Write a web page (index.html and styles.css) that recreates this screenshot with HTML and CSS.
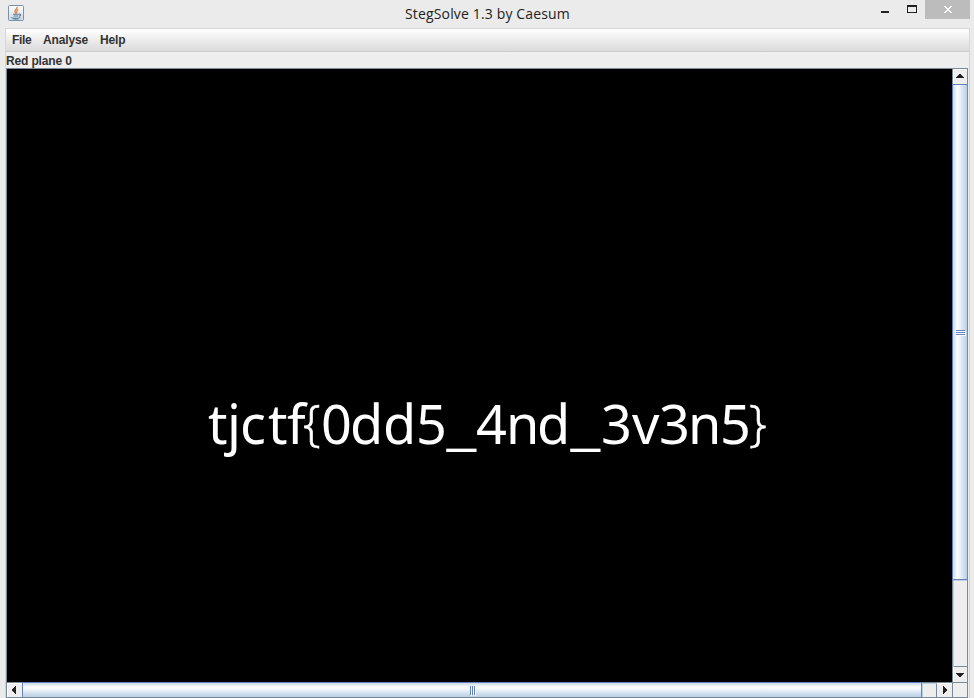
FILE: index.html
```html
<!DOCTYPE html>
<html lang="en">
<head>
<meta charset="utf-8">
<title>StegSolve 1.3 by Caesum</title>
<link rel="stylesheet" href="styles.css">
</head>
<body>
<header class="titlebar">
  <svg class="app-icon" width="16" height="16" viewBox="0 0 16 16">
    <defs><linearGradient id="tile" x2="0" y2="1"><stop stop-color="#fff"/><stop offset="1" stop-color="#cad8e2"/></linearGradient></defs>
    <rect x=".5" y=".5" width="15" height="15" rx="1" fill="url(#tile)" stroke="#7893a8"/>
    <path d="M9 1.8C10 4 5.6 4.7 7.2 7.2L8 8.7M10.2 4.4C7.8 5.5 9.4 6.8 8.5 8.2" fill="none" stroke="#e98032" stroke-width="1.3"/>
    <path d="M5 9.3H10.7M5.6 11H10M10.7 9.2C13.5 8.5 13.2 11 10.8 11.3M3.7 12.2C3 13.7 11 13.6 12.3 12.3M5.5 14H10.5" fill="none" stroke="#547c9c" stroke-width="1.1"/>
  </svg>
  <h1 class="title">StegSolve 1.3 by Caesum</h1>
  <div class="controls">
    <svg class="minimize" width="10" height="14"><path d="M1 11h8v2H1z" fill="#222"/></svg>
    <svg class="maximize" width="10" height="14"><path d="M0 5h10v8H0zM1 7v5h8V7z" fill="#222" fill-rule="evenodd"/></svg>
    <div class="close"><svg width="8" height="7" shape-rendering="crispEdges"><path d="M0 0h2v1h1v1h2V1h1V0h2v1H7v1H6v1H5v1h1v1h1v1h1v1H6V6H5V5H3v1H2v1H0V6h1V5h1V4h1V3H2V2H1V1H0z" fill="#fff"/></svg></div>
  </div>
</header>
<main class="frame">
  <nav class="menu"><span class="file">File</span><span class="analyse">Analyse</span><span class="help">Help</span></nav>
  <div class="plane">Red plane 0</div>
  <section class="scrollpane">
    <div class="picture">
      <svg width="945" height="613" viewBox="7 69 945 613">
        <text class="flag" y="444" x="208 227 240 268 287 303 321 350 383 416 447 476 506 537 571 601 632 659 688 720 749">tjctf<tspan class="brace" dy="-3">{</tspan><tspan dy="3">0dd5</tspan><tspan class="wide" dy="-2">_</tspan><tspan dy="2">4nd</tspan><tspan class="wide" dy="-2">_</tspan><tspan dy="2">3v3n5</tspan><tspan class="brace" dy="-3">}</tspan></text>
      </svg>
    </div>
    <div class="vbar">
      <div class="arrow"><svg width="8" height="4"><path d="M0 4V3h1V2h1V1h1V0h2v1h1v1h1v1h1v1z" fill="#222"/></svg></div>
      <div class="vthumb"><svg width="10" height="6"><path d="M0 .5h9M0 2.5h9M0 4.5h9" stroke="#6382bf"/><path d="M1 1.5h9M1 3.5h9M1 5.5h9" stroke="#fff"/></svg></div>
      <div class="vtrack"></div>
      <div class="arrow down"><svg width="8" height="4"><path d="M0 0h8v1H7v1H6v1H5v1H3V3H2V2H1V1H0z" fill="#222"/></svg></div>
    </div>
    <div class="hbar">
      <div class="harrow"><svg width="4" height="8"><path d="M4 0H3v1H2v1H1v1H0v2h1v1h1v1h1v1h1z" fill="#222"/></svg></div>
      <div class="hthumb"><svg width="6" height="10"><path d="M.5 0v9M2.5 0v9M4.5 0v9" stroke="#6382bf"/><path d="M1.5 1v9M3.5 1v9M5.5 1v9" stroke="#fff"/></svg></div>
      <div class="htrack"></div>
      <div class="harrow right"><svg width="4" height="8"><path d="M0 0h1v1h1v1h1v1h1v2H3v1H2v1H1v1H0z" fill="#222"/></svg></div>
    </div>
    <div class="corner"></div>
  </section>
</main>
</body>
</html>
```
FILE: styles.css
```css
* { box-sizing: border-box; }
body { margin: 0; width: 974px; height: 698px; overflow: hidden; background: #ebebeb; font-family: "Liberation Sans", sans-serif; color: #333; }
svg { display: block; flex-shrink: 0; }
.titlebar { display: grid; grid-template-columns: 405px 1fr 107px; height: 28px; }
.app-icon { margin: 5px 0 0 8px; }
.title { margin: 4px 0 0; font: 400 14px/20px "Open Sans", "Noto Sans", sans-serif; letter-spacing: .15px; color: #222; white-space: nowrap; }
.controls { display: flex; }
.minimize { margin-left: 13px; }
.maximize { margin-left: 17px; }
.close { width: 45px; height: 19px; margin-left: 8px; padding: 6px 0 0 19px; background: #bcbcbc; }
.frame { width: 965px; height: 670px; margin-left: 5px; border: 1px solid #d6d6d6; border-bottom: 0; background: #eee; }
.menu { display: flex; height: 23px; border-bottom: 1px solid #ccc; background: linear-gradient(#fff, #dadada); font: bold 12px/22px "Liberation Sans", sans-serif; letter-spacing: -.15px; padding-left: 6px; }
.file { width: 31px; letter-spacing: -.35px; }
.analyse { width: 57px; }
.plane { height: 16px; font: bold 12px/19px "Liberation Sans", sans-serif; letter-spacing: -.15px; }
.scrollpane { display: grid; grid-template-columns: 945px 15px; grid-template-rows: 613px 15px; width: 962px; height: 630px; border: 1px solid #7a8a99; }
.picture { background: #000; }
.flag { font: 54px "Noto Sans", sans-serif; fill: #fff; }
.brace { font: 300 50px "Open Sans", sans-serif; stroke: #fff; stroke-width: .6px; }
.wide { font: 52px "Liberation Sans", sans-serif; }
.vbar { display: flex; flex-direction: column; border-left: 1px solid #7a8a99; }
.arrow { height: 15px; padding: 4px 0 0 2px; border: solid #fff; border-width: 1px 0 0 1px; background: #eee; }
.vthumb { height: 496px; padding: 245px 0 0 3px; border: solid #6382bf; border-width: 1px 0; background: linear-gradient(90deg, #c8d9e9, #fff 30%, #e0eaf4 60%, #b8cfe5); box-shadow: -1px 0 #6382bf; }
.vtrack { flex: 1; border: solid #b8cfe5; border-width: 1px 0 0 1px; }
.down { height: 16px; padding-top: 6px; border-top-color: #7a8a99; }
.hbar { display: flex; border-top: 1px solid #7a8a99; }
.harrow { width: 15px; padding: 2px 0 0 4px; border: solid #fff; border-width: 1px 0 0 1px; }
.hthumb { width: 900px; padding: 3px 0 0 447px; border: solid #6382bf; border-width: 0 1px; background: linear-gradient(#c8d9e9, #fff 30%, #e0eaf4 60%, #b8cfe5); box-shadow: 0 -1px #6382bf; }
.htrack { flex: 1; border: solid #b8cfe5; border-width: 1px 0 0 1px; }
.right { width: 16px; padding-left: 6px; border-left-color: #7a8a99; }
.corner { border: solid #7a8a99; border-width: 1px 0 0 1px; background: #eee; }
```
